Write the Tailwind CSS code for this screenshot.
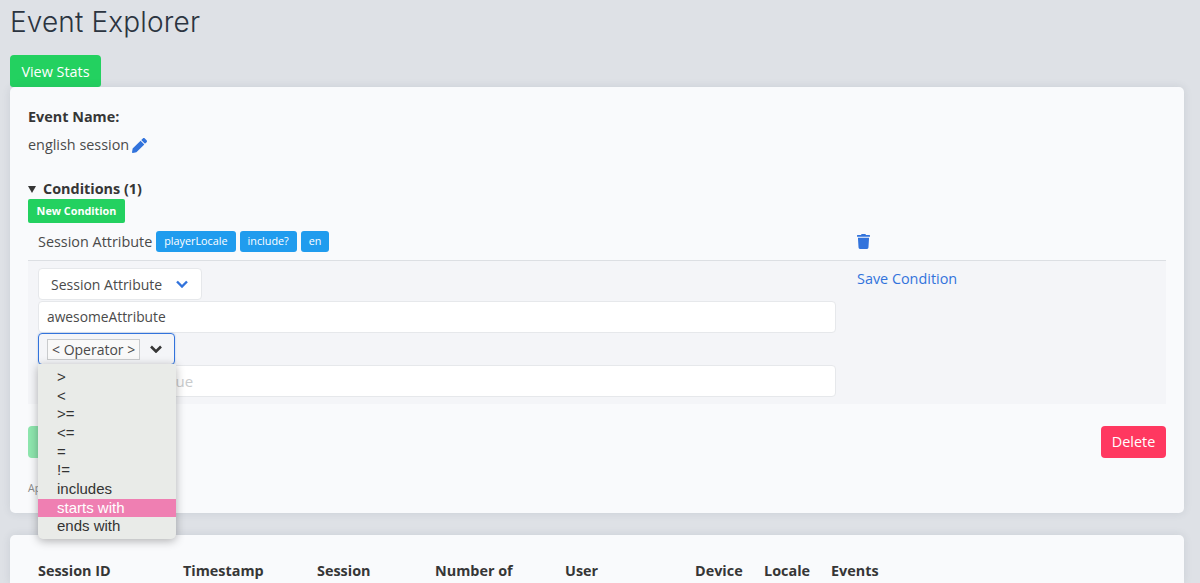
<!DOCTYPE html>
<html lang="en">
<head>
  <meta charset="UTF-8">
  <meta name="viewport" content="width=device-width, initial-scale=1.0">
  <title>Event Explorer</title>
  <script src="https://cdn.jsdelivr.net/npm/@tailwindcss/browser@4"></script>
</head>
<body class="h-[583px] overflow-hidden bg-[#dee1e6] font-['Open_Sans',sans-serif] text-[14.4px] text-[#4a4a4a]">
  <div class="pl-[10px] pr-4">
    <h1 class="pt-[3px] h-[55px] font-['Inter',sans-serif] text-[28px] leading-[38px] font-light tracking-[0.15px] text-[#2b3440]">Event Explorer</h1>
    <button class="block h-8 w-[91px] rounded-t-[4px] rounded-b-[3px] bg-[#23d160] pt-[2px] text-[14.4px] text-white">View Stats</button>

    <!-- event card -->
    <section class="relative h-[426px] rounded-[5px] bg-[#f9fafc] px-[18px] pt-5 shadow-[0_0_8px_rgba(60,70,90,0.12)]">
      <h2 class="text-[14.4px] leading-5 font-bold text-[#363636]">Event Name:</h2>
      <div class="mt-[8px] flex h-[20px] items-center gap-[3px] leading-5">
        <span>english session</span>
        <svg class="h-[15px] w-[15px] fill-[#3273dc]" viewBox="0 0 512 512"><path d="M497.9 142.1l-46.1 46.1c-4.7 4.7-12.3 4.7-17 0l-111-111c-4.7-4.7-4.7-12.3 0-17l46.1-46.1c18.7-18.7 49.1-18.7 67.9 0l60.1 60.1c18.8 18.7 18.8 49.1 0 67.9zM284.2 99.8L21.6 362.4.4 483.9c-2.9 16.4 11.4 30.6 27.8 27.8l121.5-21.3 262.6-262.6c4.7-4.7 4.7-12.3 0-17l-111-111c-4.8-4.7-12.4-4.7-17.1 0z"/></svg>
      </div>

      <div class="mt-[24px] flex h-5 items-center font-bold text-[#363636]">
        <span class="mr-[7px] h-0 w-0 border-x-[4px] border-t-[7px] border-x-transparent border-t-[#363636]"></span>
        <span>Conditions (1)</span>
      </div>
      <button class="block h-6 w-[97px] rounded-[2px] bg-[#23d160] text-[10.8px] font-bold text-white">New Condition</button>

      <!-- saved condition -->
      <div class="flex h-[38px] border-b border-[#dcdfe3]">
        <div class="flex w-[829px] items-center pl-[10px]">
          <span class="mr-1">Session Attribute</span>
          <div class="flex gap-[4px] text-[10.8px] text-white">
            <span class="flex h-[21px] items-center rounded-[3px] bg-[#209cee] px-2">playerLocale</span>
            <span class="flex h-[21px] items-center rounded-[3px] bg-[#209cee] px-2">include?</span>
            <span class="flex h-[21px] items-center rounded-[3px] bg-[#209cee] px-2">en</span>
          </div>
        </div>
        <div class="flex items-center">
          <svg class="h-[15px] w-[13px] fill-[#3273dc]" viewBox="0 0 448 512"><path d="M432 32H312l-9.4-18.7A24 24 0 0 0 281.1 0H166.8a23.72 23.72 0 0 0-21.4 13.3L136 32H16A16 16 0 0 0 0 48v32a16 16 0 0 0 16 16h416a16 16 0 0 0 16-16V48a16 16 0 0 0-16-16zM53.2 467a48 48 0 0 0 47.9 45h245.8a48 48 0 0 0 47.9-45L416 128H32z"/></svg>
        </div>
      </div>

      <!-- condition editor -->
      <div class="flex h-[143px] bg-[#f4f5f8] pl-[10px] pt-[7px]">
        <div class="w-[798px]">
          <div class="flex h-8 w-[164px] items-center rounded-[4px] border border-[#e6e8eb] bg-white pl-3 text-[14px]">
            <span class="pt-px">Session Attribute</span>
            <svg class="ml-[14px] h-[8px] w-[12px] fill-none stroke-[#3273dc] stroke-[2.4]" viewBox="0 0 12 8"><path d="M1 1.5l5 5 5-5"/></svg>
          </div>
          <input class="mt-px block h-8 w-full rounded-[4px] border border-[#e6e8eb] bg-white px-2 pb-[2px] text-[13.8px] text-[#4a4a4a] outline-none" value="awesomeAttribute">
          <div class="flex h-8 w-[137px] items-center rounded-[4px] border border-[#3273dc] pl-2 shadow-[0_0_2px_rgba(50,115,220,0.4)]">
            <span class="flex h-[21px] items-center border border-[#c9cbcd] bg-[#f9f9f9] px-1 text-[14px]">&lt; Operator &gt;</span>
            <svg class="ml-[10px] h-[8px] w-[12px] fill-none stroke-[#363636] stroke-[2.6]" viewBox="0 0 12 8"><path d="M1 1.5l5 5 5-5"/></svg>
          </div>
          <input class="block h-8 w-full rounded-[4px] border border-[#e6e8eb] bg-white px-2 text-[15px] outline-none placeholder:text-[#c9cbcd]" placeholder="Enter Attribute Value">
        </div>
        <div class="ml-[21px] pt-px leading-5 text-[#3273dc]">Save Condition</div>
      </div>

      <div class="mt-[22px] flex items-start justify-between">
        <button class="h-8 w-[60px] rounded-[4px] bg-[#23d160]/50" aria-label="Save"></button>
        <button class="h-8 w-[65px] rounded-[4px] bg-[#ff3860] pb-px text-[14.4px] text-white">Delete</button>
      </div>
      <p class="mt-[22px] text-[10.5px] leading-4 text-[#8a8a8a]">Ap</p>
    </section>

    <!-- sessions table -->
    <section class="mt-[22px] h-[48px] rounded-t-[5px] bg-[#f9fafc] px-7 pt-[26px] shadow-[0_0_8px_rgba(60,70,90,0.12)]">
      <div class="grid grid-cols-[145px_134px_118px_130px_130px_69px_67px_auto] text-[14.4px] leading-5 font-bold text-[#363636]">
        <span>Session ID</span>
        <span>Timestamp</span>
        <span>Session</span>
        <span>Number of</span>
        <span>User</span>
        <span>Device</span>
        <span>Locale</span>
        <span>Events</span>
      </div>
    </section>
  </div>

  <!-- open operator menu -->
  <ul class="absolute left-[38px] top-[364px] w-[138px] rounded-b-[5px] bg-[#e9ebe8] pb-[3px] pt-[4px] font-['Liberation_Sans',sans-serif] text-[15px] leading-[18.67px] text-[#333] shadow-[0_2px_10px_rgba(0,0,0,0.3)]">
    <li class="pl-[19px]">&gt;</li>
    <li class="pl-[19px]">&lt;</li>
    <li class="pl-[19px]">&gt;=</li>
    <li class="pl-[19px]">&lt;=</li>
    <li class="pl-[19px]">=</li>
    <li class="pl-[19px]">!=</li>
    <li class="pl-[19px]">includes</li>
    <li class="bg-[#ef7fb2] pl-[19px] text-white">starts with</li>
    <li class="pl-[19px]">ends with</li>
  </ul>
</body>
</html>
